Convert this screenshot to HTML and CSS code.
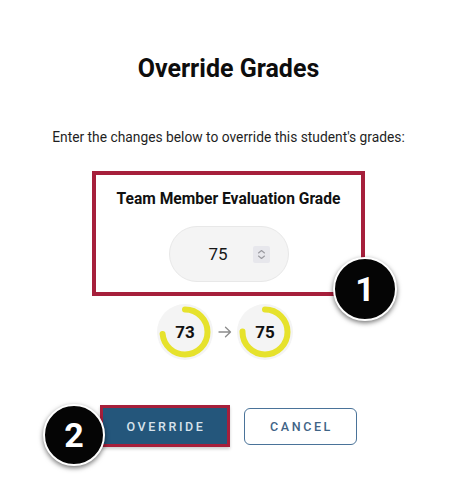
FILE: index.html
```html
<!DOCTYPE html>
<html lang="en">
<head>
<meta charset="utf-8">
<title>Override Grades</title>
<link rel="stylesheet" href="styles.css">
</head>
<body>
<main class="dialog">
  <h1 class="title">Override Grades</h1>
  <p class="intro">Enter the changes below to override this student's grades:</p>

  <section class="grade-box">
    <h2 class="grade-label">Team Member Evaluation Grade</h2>
    <div class="number-input">
      <span class="number-value">75</span>
      <span class="spinner">
        <svg width="17" height="17" viewBox="0 0 17 17">
          <path d="M5.5 7 L8.5 4.5 L11.5 7" fill="none" stroke="#9a9aa0" stroke-width="1.1" stroke-linecap="round" stroke-linejoin="round"/>
          <path d="M5.5 10 L8.5 12.5 L11.5 10" fill="none" stroke="#9a9aa0" stroke-width="1.1" stroke-linecap="round" stroke-linejoin="round"/>
        </svg>
      </span>
    </div>
    <span class="badge badge-one">1</span>
  </section>

  <div class="change">
    <div class="donut">
      <svg width="56" height="56" viewBox="0 0 56 56">
        <circle cx="28" cy="28" r="28" fill="#f4f4f4"/>
        <circle cx="28" cy="28" r="22.5" fill="none" stroke="#e6e22c" stroke-width="6" stroke-linecap="round"
          stroke-dasharray="103.2 200" transform="rotate(-90 28 28)"/>
      </svg>
      <span class="donut-value">73</span>
    </div>
    <svg class="arrow" width="14" height="12" viewBox="0 0 14 12">
      <path d="M1 6 H12.5 M7.5 1.2 L12.5 6 L7.5 10.8" fill="none" stroke="#8c8c8c" stroke-width="1.3" stroke-linecap="round" stroke-linejoin="round"/>
    </svg>
    <div class="donut">
      <svg width="56" height="56" viewBox="0 0 56 56">
        <circle cx="28" cy="28" r="28" fill="#f4f4f4"/>
        <circle cx="28" cy="28" r="22.5" fill="none" stroke="#e6e22c" stroke-width="6" stroke-linecap="round"
          stroke-dasharray="106 200" transform="rotate(-90 28 28)"/>
      </svg>
      <span class="donut-value">75</span>
    </div>
  </div>

  <div class="actions">
    <div class="override-wrap">
      <button class="btn-primary" type="button">OVERRIDE</button>
      <span class="badge badge-two">2</span>
    </div>
    <button class="btn-secondary" type="button">CANCEL</button>
  </div>
</main>
</body>
</html>
```

FILE: styles.css
```css
* { box-sizing: border-box; }

body {
  margin: 0;
  background: #ffffff;
  font-family: Roboto, "Liberation Sans", sans-serif;
  color: #111111;
}

.dialog {
  width: 457px;
  min-height: 500px;
  display: flex;
  flex-direction: column;
  align-items: center;
  padding-top: 55px;
  padding-bottom: 40px;
}

.title {
  margin: 0;
  font-size: 25px;
  line-height: 28px;
  font-weight: 700;
  color: #0d0d0d;
}

.intro {
  margin: 46px 0 0;
  font-size: 13.8px;
  line-height: 16px;
  color: #1f1f1f;
}

.grade-box {
  position: relative;
  margin-top: 26px;
  width: 273px;
  border: 4px solid #a61f3b;
  padding: 15px 0 10px;
  display: flex;
  flex-direction: column;
  align-items: center;
}

.grade-label {
  margin: 0;
  font-size: 15.6px;
  line-height: 19px;
  font-weight: 700;
  color: #111111;
}

.number-input {
  margin-top: 17px;
  width: 120px;
  height: 56px;
  border-radius: 28px;
  background: #f4f4f4;
  border: 1px solid #e8e8e8;
  display: flex;
  align-items: center;
  padding-left: 39px;
}

.number-value {
  font-size: 17px;
  color: #161616;
  width: 44px;
}

.spinner {
  display: flex;
  width: 17px;
  height: 17px;
  background: #e7e7ec;
  border-radius: 2px;
}

.badge {
  position: absolute;
  display: flex;
  align-items: center;
  justify-content: center;
  border-radius: 50%;
  background: #050505;
  border: 2.5px solid #ffffff;
  box-shadow: 0 2px 5px rgba(0, 0, 0, 0.55);
  color: #ffffff;
  font-weight: 700;
  font-size: 34px;
}

.badge-one {
  width: 64px;
  height: 64px;
  right: -36px;
  bottom: -29px;
}

.change {
  margin-top: 8px;
  margin-right: 7px;
  display: flex;
  align-items: center;
  gap: 5px;
}

.donut {
  position: relative;
  width: 56px;
  height: 56px;
  display: flex;
  align-items: center;
  justify-content: center;
}

.donut svg {
  position: absolute;
  left: 0;
  top: 0;
}

.donut-value {
  position: relative;
  font-size: 17px;
  font-weight: 700;
  color: #111111;
}

.arrow {
  display: block;
}

.actions {
  margin-top: 45px;
  display: flex;
  align-items: center;
  gap: 14px;
}

.override-wrap {
  position: relative;
  display: flex;
}

.btn-primary {
  width: 130px;
  height: 42px;
  background: #24567b;
  border: 3px solid #a61f3b;
  color: #d7e2eb;
  font-family: Roboto, "Liberation Sans", sans-serif;
  font-size: 12.5px;
  font-weight: 500;
  letter-spacing: 2.6px;
  padding: 0 0 0 2px;
  box-shadow: 0 2px 3px rgba(0, 0, 0, 0.2);
}

.btn-secondary {
  width: 113px;
  height: 37px;
  background: #ffffff;
  border: 1.5px solid #4a7399;
  border-radius: 6px;
  color: #3f6486;
  font-family: Roboto, "Liberation Sans", sans-serif;
  font-size: 12.5px;
  font-weight: 500;
  letter-spacing: 2.6px;
  padding: 0 0 0 2px;
}

.badge-two {
  width: 62px;
  height: 62px;
  left: -57px;
  top: -1px;
}
```
